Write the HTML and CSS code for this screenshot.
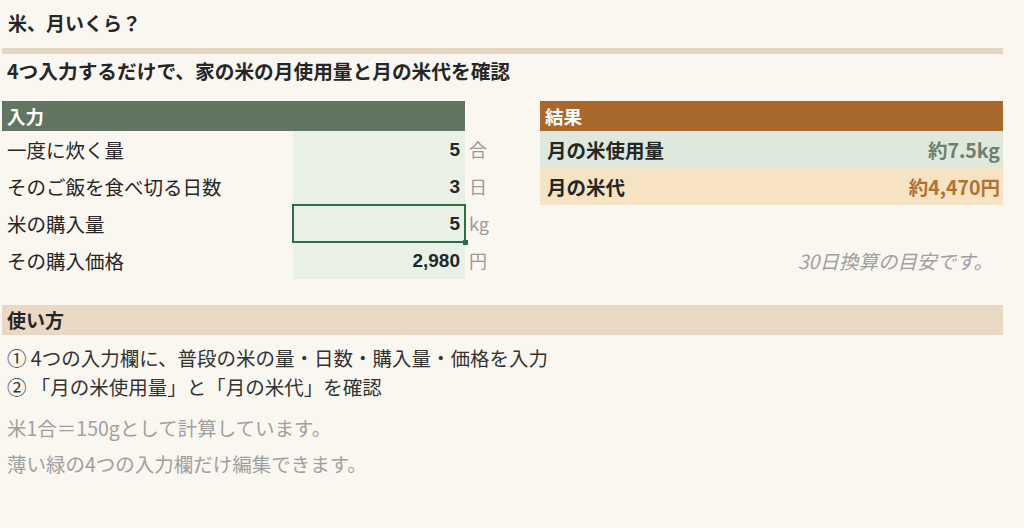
FILE: index.html
```html
<!DOCTYPE html>
<html lang="ja">
<head>
  <meta charset="UTF-8" />
  <title>米、月いくら？</title>
  <link rel="stylesheet" href="styles.css">
</head>
<body>
  <div class="sheet">
    <div class="title">米、月いくら？</div>
    <div class="rule"></div>
    <div class="subtitle">4つ入力するだけで、家の米の月使用量と月の米代を確認</div>

    <div class="calc">
      <div class="head head-input">入力</div>
      <div class="blank"></div>
      <div class="head head-result">結果</div>

      <div class="label">一度に炊く量</div>
      <div class="value">5</div>
      <div class="unit">合</div>
      <div class="res res-kg"><span>月の米使用量</span><span class="res-num">約7.5kg</span></div>

      <div class="label">そのご飯を食べ切る日数</div>
      <div class="value">3</div>
      <div class="unit">日</div>
      <div class="res res-yen"><span>月の米代</span><span class="res-num">約4,470円</span></div>

      <div class="label">米の購入量</div>
      <div class="value selected">5</div>
      <div class="unit">kg</div>
      <div class="blank"></div>

      <div class="label">その購入価格</div>
      <div class="value">2,980</div>
      <div class="unit">円</div>
      <div class="note">30日換算の目安です。</div>
    </div>

    <div class="howto">使い方</div>
    <div class="steps">
      <div>① 4つの入力欄に、普段の米の量・日数・購入量・価格を入力</div>
      <div>② 「月の米使用量」と「月の米代」を確認</div>
    </div>
    <div class="hints">
      <div>米1合＝150gとして計算しています。</div>
      <div>薄い緑の4つの入力欄だけ編集できます。</div>
    </div>
  </div>
</body>
</html>
```

FILE: styles.css
```css
body {
  margin: 0;
  background-color: #faf7f1;
  font-family: "Noto Sans CJK JP", "Noto Sans", sans-serif;
  color: #262626;
}
.sheet {
  width: 1001px;
  padding: 0 2px;
}
.title {
  height: 48px;
  line-height: 46px;
  padding-left: 6px;
  font-size: 19px;
  font-weight: bold;
}
.rule {
  height: 6px;
  background-color: #e6d5c1;
}
.subtitle {
  height: 47px;
  line-height: 33px;
  padding-left: 5px;
  font-size: 19.7px;
  font-weight: bold;
}
.calc {
  display: grid;
  grid-template-columns: 291px 172px 75px 463px;
  grid-template-rows: 30px repeat(4, 37px);
}
.head {
  color: #fff;
  font-size: 18.5px;
  font-weight: bold;
  line-height: 30px;
  padding-left: 5px;
}
.head-input {
  grid-column: 1 / 3;
  background-color: #627560;
}
.head-result {
  background-color: #a8682b;
}
.label {
  font-size: 19.5px;
  line-height: 37px;
  padding-left: 5px;
}
.value {
  background-color: #e9f1e7;
  font-family: "Liberation Sans", Arial, sans-serif;
  font-weight: bold;
  font-size: 19px;
  line-height: 37px;
  text-align: right;
  padding-right: 5px;
}
.selected {
  position: relative;
}
.selected::after {
  content: "";
  position: absolute;
  top: -1px;
  left: -1px;
  right: -1px;
  bottom: -1px;
  border: 2px solid #2f6e45;
}
.selected::before {
  content: "";
  position: absolute;
  right: -3px;
  bottom: -3px;
  width: 5px;
  height: 5px;
  background-color: #2f6e45;
  z-index: 1;
}
.unit {
  color: #9a9a9a;
  font-size: 18px;
  line-height: 37px;
  padding-left: 4px;
}
.res {
  display: flex;
  justify-content: space-between;
  align-items: center;
  font-size: 19.5px;
  font-weight: bold;
  padding: 0 3px 0 7px;
}
.res-kg {
  background-color: #dee8dc;
}
.res-kg .res-num {
  color: #6e7f6b;
}
.res-yen {
  background-color: #f5e3c4;
}
.res-yen .res-num {
  color: #b07332;
}
.note {
  color: #a0a0a0;
  font-size: 19.5px;
  font-style: italic;
  line-height: 37px;
  text-align: right;
  padding-right: 10px;
}
.howto {
  margin-top: 26px;
  height: 30px;
  line-height: 30px;
  background-color: #e9d8c4;
  font-size: 19px;
  font-weight: bold;
  padding-left: 5px;
}
.steps {
  padding: 8px 0 0 5px;
  font-size: 19.5px;
  line-height: 29px;
  color: #333;
}
.hints {
  padding: 9px 0 0 5px;
  font-size: 19.5px;
  line-height: 36px;
  color: #a0a0a0;
}
```
